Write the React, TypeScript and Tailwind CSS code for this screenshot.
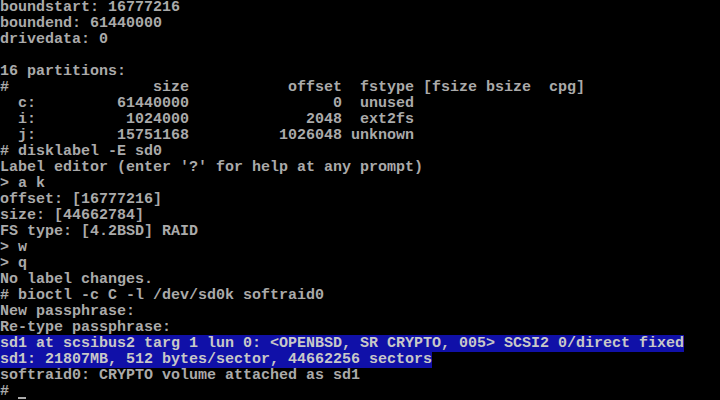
import React from "react";

const lines: { text: string; hl?: boolean }[] = [
  { text: "boundstart: 16777216" },
  { text: "boundend: 61440000" },
  { text: "drivedata: 0" },
  { text: "" },
  { text: "16 partitions:" },
  { text: "#                size           offset  fstype [fsize bsize  cpg]" },
  { text: "  c:         61440000                0  unused" },
  { text: "  i:          1024000             2048  ext2fs" },
  { text: "  j:         15751168          1026048 unknown" },
  { text: "# disklabel -E sd0" },
  { text: "Label editor (enter '?' for help at any prompt)" },
  { text: "> a k" },
  { text: "offset: [16777216]" },
  { text: "size: [44662784]" },
  { text: "FS type: [4.2BSD] RAID" },
  { text: "> w" },
  { text: "> q" },
  { text: "No label changes." },
  { text: "# bioctl -c C -l /dev/sd0k softraid0" },
  { text: "New passphrase:" },
  { text: "Re-type passphrase:" },
  { text: "sd1 at scsibus2 targ 1 lun 0: <OPENBSD, SR CRYPTO, 005> SCSI2 0/direct fixed", hl: true },
  { text: "sd1: 21807MB, 512 bytes/sector, 44662256 sectors", hl: true },
  { text: "softraid0: CRYPTO volume attached as sd1" },
];

export default function App() {
  return (
    <div className="w-[720px] h-[400px] bg-black overflow-hidden font-['Liberation_Mono',monospace] text-[15px] leading-[16px] text-[#aaaaaa] font-bold">
      {lines.map((line, i) => (
        <div key={i} className="h-[16px] whitespace-pre">
          {line.hl ? (
            <span className="bg-[#1010a8] text-[#c8c8c8]">{line.text}</span>
          ) : (
            line.text
          )}
        </div>
      ))}
      {/* prompt with cursor */}
      <div className="h-[16px] whitespace-pre flex">
        <span>#</span>
        <span className="w-[9px]"></span>
        <span className="w-[9px] h-[16px] flex items-end pb-[1px]">
          <span className="block w-[8px] h-[2px] bg-[#aaaaaa]"></span>
        </span>
      </div>
    </div>
  );
}
